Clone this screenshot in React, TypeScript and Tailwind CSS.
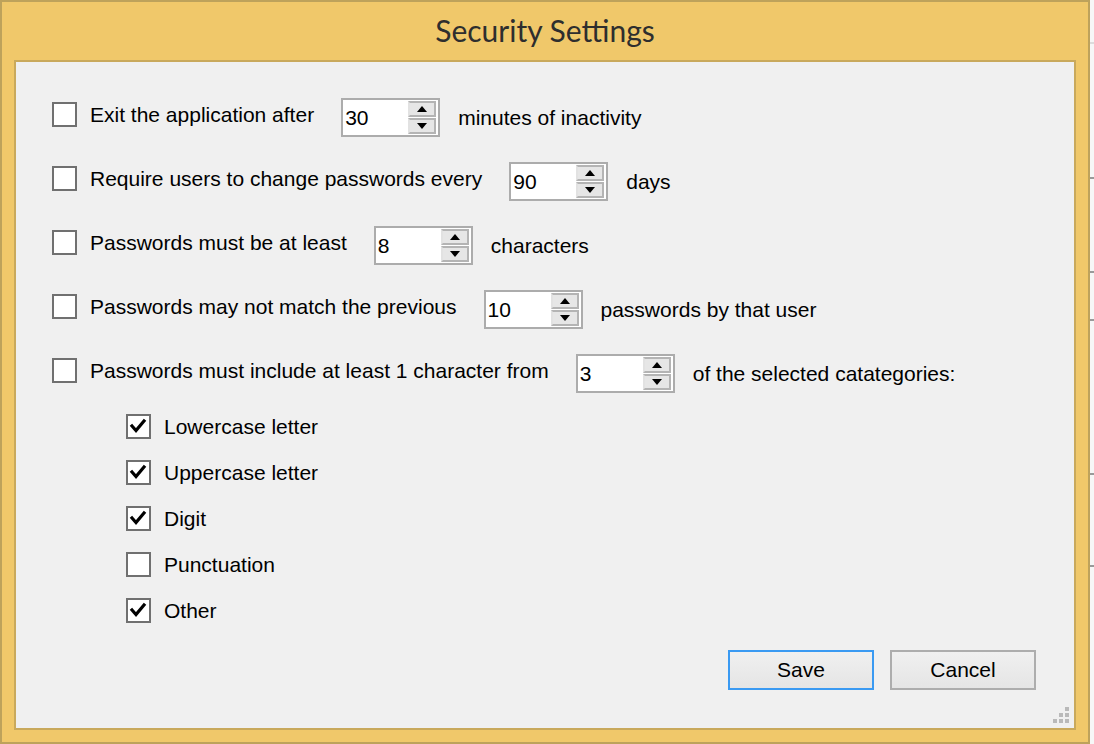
import React from "react";

const F = { fontFamily: '"Liberation Sans", Arial, sans-serif' };

function Check({ checked }: { checked: boolean }) {
  return (
    <div className="w-[25px] h-[25px] shrink-0 border-2 border-[#707070] bg-white flex items-center justify-center">
      {checked && (
        <svg width="21" height="21" viewBox="0 0 21 21">
          <polyline points="4,10 8,14.5 16,5" fill="none" stroke="#000" strokeWidth="3.2" strokeLinecap="square" />
        </svg>
      )}
    </div>
  );
}

function Spin({ value }: { value: string }) {
  return (
    <div className="w-[99px] h-[39px] shrink-0 border-2 border-[#acacac] bg-white flex">
      <div className="flex-1 pl-[2px] text-[21px] leading-[35px] text-black" style={F}>{value}</div>
      <div className="w-[28px] mr-[2px] py-[1px] flex flex-col gap-[1px]">
        <div className="flex-1 bg-[#e6e6e6] border-2 border-[#b4b4b4] border-l-[#e2e2e2] flex items-center justify-center">
          <svg width="10" height="6" viewBox="0 0 10 6"><polygon points="0,6 10,6 5,0" fill="#000" /></svg>
        </div>
        <div className="flex-1 bg-[#e6e6e6] border-2 border-[#b4b4b4] border-l-[#e2e2e2] flex items-center justify-center">
          <svg width="10" height="6" viewBox="0 0 10 6"><polygon points="0,0 10,0 5,6" fill="#000" /></svg>
        </div>
      </div>
    </div>
  );
}

function Row({ pre, value, post }: { pre: string; value: string; post: string }) {
  return (
    <div className="flex items-start h-[39px]">
      <div className="mt-[4px]"><Check checked={false} /></div>
      <div className="ml-[13px] mt-[4px] leading-[25px] text-[21px] text-black whitespace-nowrap" style={F}>{pre}</div>
      <div className="ml-[27px]"><Spin value={value} /></div>
      <div className="ml-[18px] mt-[7px] leading-[25px] text-[21px] text-black whitespace-nowrap" style={F}>{post}</div>
    </div>
  );
}

function Sub({ label, checked }: { label: string; checked: boolean }) {
  return (
    <div className="flex items-center h-[25px]">
      <Check checked={checked} />
      <div className="ml-[13px] leading-[25px] text-[21px] text-black whitespace-nowrap" style={F}>{label}</div>
    </div>
  );
}

function Btn({ label, primary }: { label: string; primary?: boolean }) {
  return (
    <div
      className={
        "w-[146px] h-[40px] border-2 flex items-center justify-center text-[21px] text-black bg-gradient-to-b from-[#f0f0f0] to-[#e5e5e5] " +
        (primary ? "border-[#3a9af2]" : "border-[#adadad]")
      }
      style={F}
    >
      {label}
    </div>
  );
}

export default function App() {
  return (
    <div className="w-[1094px] h-[744px] flex bg-[#f7f7f7] overflow-hidden">
      <div className="w-[1090px] h-[744px] shrink-0 border-2 border-[#bda25b] bg-[#f0c86a] flex flex-col">
        <div
          className="h-[58px] flex items-center justify-center text-[30px] text-[#2e2e2e] pb-[2px]"
          style={{ fontFamily: 'Lato, "Noto Sans", sans-serif' }}
        >
          Security Settings
        </div>
        <div className="relative flex-1 mx-[12px] mb-[12px] border-2 border-[#c9a95c] bg-[#f0f0f0] flex flex-col pl-[36px] pt-[36px]">
          <div className="flex flex-col gap-[25px]">
            <Row pre="Exit the application after" value="30" post="minutes of inactivity" />
            <Row pre="Require users to change passwords every" value="90" post="days" />
            <Row pre="Passwords must be at least" value="8" post="characters" />
            <Row pre="Passwords may not match the previous" value="10" post="passwords by that user" />
            <Row pre="Passwords must include at least 1 character from" value="3" post="of the selected catategories:" />
          </div>
          <div className="flex flex-col gap-[21px] mt-[21px] ml-[74px]">
            <Sub label="Lowercase letter" checked />
            <Sub label="Uppercase letter" checked />
            <Sub label="Digit" checked />
            <Sub label="Punctuation" checked={false} />
            <Sub label="Other" checked />
          </div>
          <div className="flex justify-end gap-[16px] mt-[27px] pr-[38px]">
            <Btn label="Save" primary />
            <Btn label="Cancel" />
          </div>
          <svg className="absolute right-[4px] bottom-[4px]" width="18" height="18" viewBox="0 0 18 18">
            <rect x="13" y="1" width="4" height="4" fill="#b9b9b9" />
            <rect x="7" y="7" width="4" height="4" fill="#b9b9b9" />
            <rect x="13" y="7" width="4" height="4" fill="#b9b9b9" />
            <rect x="1" y="13" width="4" height="4" fill="#b9b9b9" />
            <rect x="7" y="13" width="4" height="4" fill="#b9b9b9" />
            <rect x="13" y="13" width="4" height="4" fill="#b9b9b9" />
          </svg>
        </div>
      </div>
      <svg width="4" height="744" viewBox="0 0 4 744" className="shrink-0">
        <rect x="0" y="42" width="4" height="2" fill="#dcdcdc" />
        <rect x="0" y="177" width="4" height="2" fill="#9a9a9a" />
        <rect x="0" y="271" width="4" height="2" fill="#9a9a9a" />
        <rect x="0" y="319" width="4" height="2" fill="#9a9a9a" />
        <rect x="0" y="473" width="4" height="2" fill="#9a9a9a" />
        <rect x="0" y="565" width="4" height="2" fill="#9a9a9a" />
      </svg>
    </div>
  );
}
